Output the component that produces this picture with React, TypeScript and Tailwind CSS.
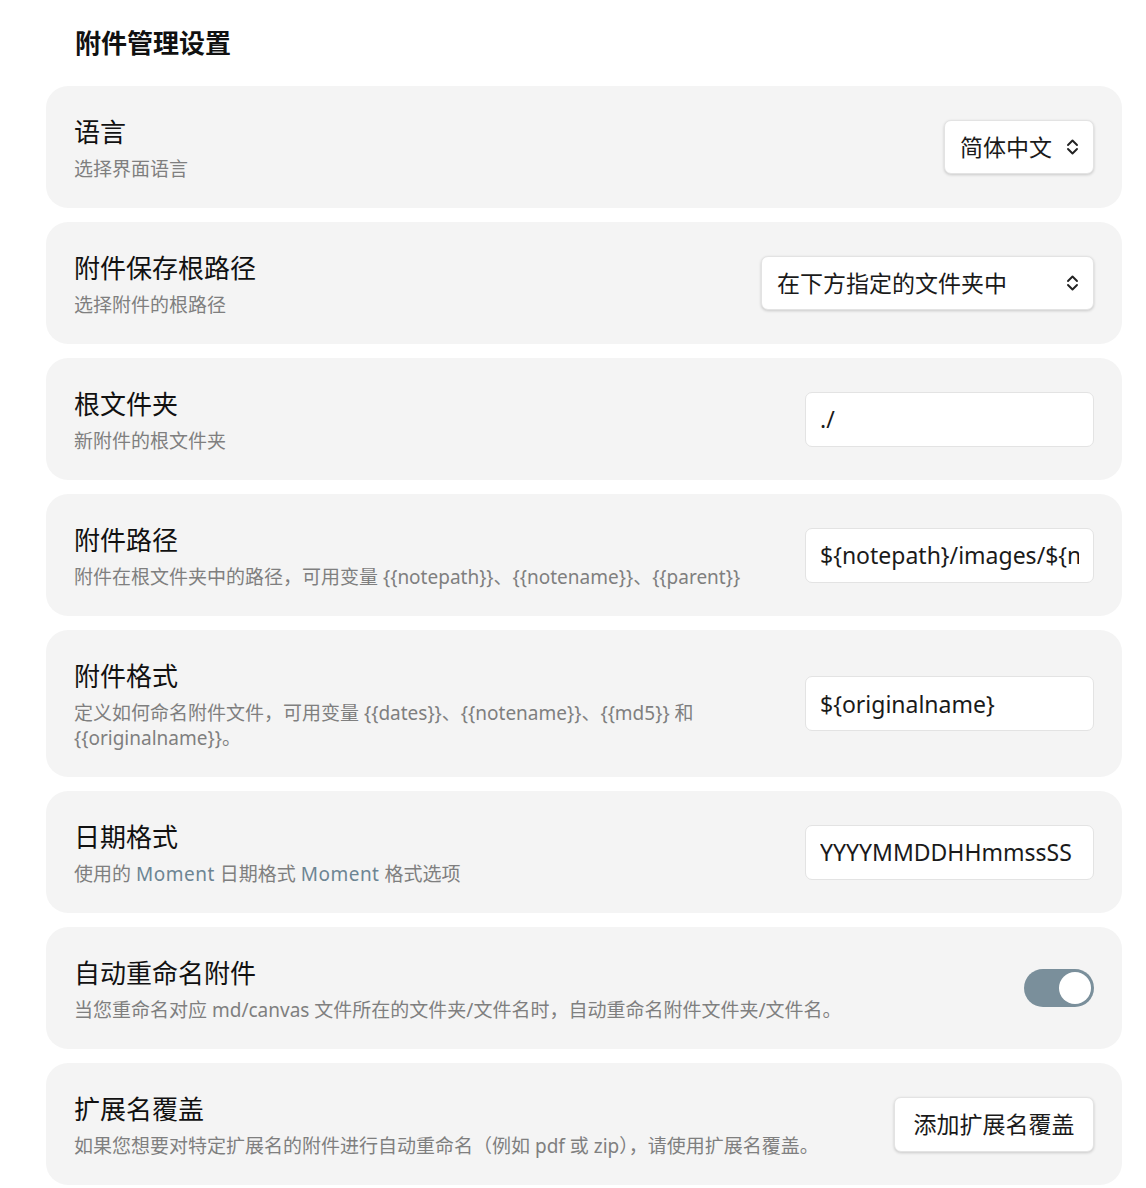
import React from "react";

const FONT = '"Noto Sans", "Noto Sans CJK SC", sans-serif';

function Chevrons() {
  return (
    <svg width="15" height="20" viewBox="0 0 15 20" fill="none" stroke="#222" strokeWidth="1.9" strokeLinecap="round" strokeLinejoin="round">
      <path d="M3 8 L7.5 3.5 L12 8" />
      <path d="M3 12 L7.5 16.5 L12 12" />
    </svg>
  );
}

function SelectBox({ value, width }: { value: string; width: string }) {
  return (
    <div
      className={`${width} h-[54px] flex items-center justify-between pl-[15px] pr-[13px] bg-white rounded-[7px] border border-[#e3e3e3] shadow-[0_1px_3px_rgba(0,0,0,0.18)] text-[23px] text-[#1a1a1a]`}
    >
      <span>{value}</span>
      <Chevrons />
    </div>
  );
}

function TextBox({ value }: { value: string }) {
  return (
    <input
      readOnly
      value={value}
      className="w-[289px] h-[55px] px-[14px] bg-white rounded-[7px] border border-[#e3e3e3] text-[23px] text-[#1a1a1a] outline-none"
      style={{ fontFamily: FONT }}
    />
  );
}

function Toggle() {
  return (
    <div className="w-[70px] h-[38px] rounded-full bg-[#7a8f9b] flex items-center justify-end pr-[3px]">
      <div className="w-[32px] h-[32px] rounded-full bg-white" />
    </div>
  );
}

function Row({
  title,
  desc,
  control,
}: {
  title: string;
  desc: React.ReactNode;
  control: React.ReactNode;
}) {
  return (
    <div className="flex items-center justify-between gap-[28px] bg-[#f4f4f4] rounded-[22px] px-[28px] pt-[29px] pb-[26px]">
      <div className="flex-1 min-w-0">
        <div className="text-[26px] leading-[34px] text-[#111]">{title}</div>
        <div className="mt-[8px] text-[19px] leading-[25px] text-[#7f7f7f]">{desc}</div>
      </div>
      <div className="shrink-0 -mt-[3px] flex">{control}</div>
    </div>
  );
}

export default function App() {
  return (
    <div className="min-h-[1188px] bg-white pl-[46px] pr-[24px] pt-[26px]" style={{ fontFamily: FONT }}>
      <h1 className="pl-[29px] text-[26px] leading-[34px] font-bold text-[#111] mb-[26px]">附件管理设置</h1>
      <div className="flex flex-col gap-[14px]">
        <Row title="语言" desc="选择界面语言" control={<SelectBox value="简体中文" width="w-[150px]" />} />
        <Row
          title="附件保存根路径"
          desc="选择附件的根路径"
          control={<SelectBox value="在下方指定的文件夹中" width="w-[333px]" />}
        />
        <Row title="根文件夹" desc="新附件的根文件夹" control={<TextBox value="./" />} />
        <Row
          title="附件路径"
          desc="附件在根文件夹中的路径，可用变量 {{notepath}}、{{notename}}、{{parent}}"
          control={<TextBox value="${notepath}/images/${notename}" />}
        />
        <Row
          title="附件格式"
          desc="定义如何命名附件文件，可用变量 {{dates}}、{{notename}}、{{md5}} 和 {{originalname}}。"
          control={<TextBox value="${originalname}" />}
        />
        <Row
          title="日期格式"
          desc={
            <>
              使用的 <span className="text-[#6d8593] tracking-[0.5px]">Moment</span> 日期格式{" "}
              <span className="text-[#6d8593] tracking-[0.5px]">Moment</span> 格式选项
            </>
          }
          control={<TextBox value="YYYYMMDDHHmmssSS" />}
        />
        <Row
          title="自动重命名附件"
          desc="当您重命名对应 md/canvas 文件所在的文件夹/文件名时，自动重命名附件文件夹/文件名。"
          control={<Toggle />}
        />
        <Row
          title="扩展名覆盖"
          desc="如果您想要对特定扩展名的附件进行自动重命名（例如 pdf 或 zip），请使用扩展名覆盖。"
          control={
            <button className="w-[200px] h-[55px] bg-white rounded-[7px] border border-[#e3e3e3] shadow-[0_1px_3px_rgba(0,0,0,0.18)] text-[23px] text-[#1a1a1a]">
              添加扩展名覆盖
            </button>
          }
        />
      </div>
    </div>
  );
}
